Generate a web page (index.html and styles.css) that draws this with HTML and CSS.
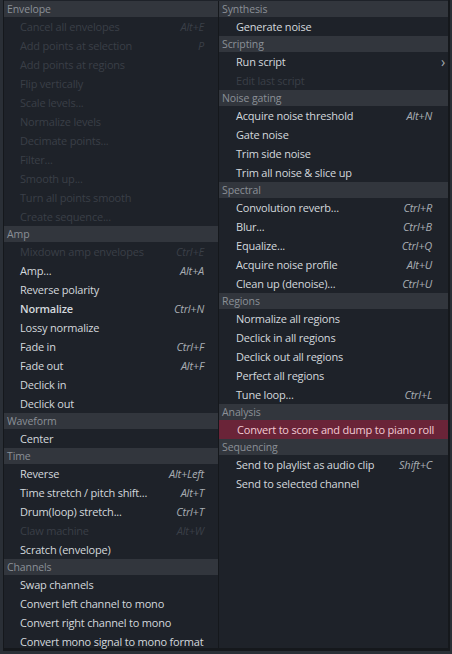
FILE: index.html
```html
<!DOCTYPE html>
<html>
<head>
<meta charset="utf-8">
<link rel="stylesheet" href="styles.css">
</head>
<body>
<div class="menu">
  <div class="col col-left">
    <div class="hdr">Envelope</div>
    <div class="item dis"><span>Cancel all envelopes</span><span class="sc">Alt+E</span></div>
    <div class="item dis"><span>Add points at selection</span><span class="sc">P</span></div>
    <div class="item dis"><span>Add points at regions</span></div>
    <div class="item dis"><span>Flip vertically</span></div>
    <div class="item dis"><span>Scale levels...</span></div>
    <div class="item dis"><span>Normalize levels</span></div>
    <div class="item dis"><span>Decimate points...</span></div>
    <div class="item dis"><span>Filter...</span></div>
    <div class="item dis"><span>Smooth up...</span></div>
    <div class="item dis"><span>Turn all points smooth</span></div>
    <div class="item dis"><span>Create sequence...</span></div>
    <div class="hdr">Amp</div>
    <div class="item dis"><span>Mixdown amp envelopes</span><span class="sc">Ctrl+E</span></div>
    <div class="item"><span>Amp...</span><span class="sc">Alt+A</span></div>
    <div class="item"><span>Reverse polarity</span></div>
    <div class="item"><span class="bold">Normalize</span><span class="sc">Ctrl+N</span></div>
    <div class="item"><span>Lossy normalize</span></div>
    <div class="item"><span>Fade in</span><span class="sc">Ctrl+F</span></div>
    <div class="item"><span>Fade out</span><span class="sc">Alt+F</span></div>
    <div class="item"><span>Declick in</span></div>
    <div class="item"><span>Declick out</span></div>
    <div class="hdr">Waveform</div>
    <div class="item"><span>Center</span></div>
    <div class="hdr">Time</div>
    <div class="item"><span>Reverse</span><span class="sc">Alt+Left</span></div>
    <div class="item"><span>Time stretch / pitch shift...</span><span class="sc">Alt+T</span></div>
    <div class="item"><span>Drum(loop) stretch...</span><span class="sc">Ctrl+T</span></div>
    <div class="item dis"><span>Claw machine</span><span class="sc">Alt+W</span></div>
    <div class="item"><span>Scratch (envelope)</span></div>
    <div class="hdr">Channels</div>
    <div class="item"><span>Swap channels</span></div>
    <div class="item"><span>Convert left channel to mono</span></div>
    <div class="item"><span>Convert right channel to mono</span></div>
    <div class="item"><span>Convert mono signal to mono format</span></div>
  </div>
  <div class="col col-right">
    <div class="hdr">Synthesis</div>
    <div class="item"><span>Generate noise</span></div>
    <div class="hdr">Scripting</div>
    <div class="item"><span>Run script</span><span class="chev">&#8250;</span></div>
    <div class="item dis"><span>Edit last script</span></div>
    <div class="hdr">Noise gating</div>
    <div class="item"><span>Acquire noise threshold</span><span class="sc">Alt+N</span></div>
    <div class="item"><span>Gate noise</span></div>
    <div class="item"><span>Trim side noise</span></div>
    <div class="item"><span>Trim all noise &amp; slice up</span></div>
    <div class="hdr">Spectral</div>
    <div class="item"><span>Convolution reverb...</span><span class="sc">Ctrl+R</span></div>
    <div class="item"><span>Blur...</span><span class="sc">Ctrl+B</span></div>
    <div class="item"><span>Equalize...</span><span class="sc">Ctrl+Q</span></div>
    <div class="item"><span>Acquire noise profile</span><span class="sc">Alt+U</span></div>
    <div class="item"><span>Clean up (denoise)...</span><span class="sc">Ctrl+U</span></div>
    <div class="hdr">Regions</div>
    <div class="item"><span>Normalize all regions</span></div>
    <div class="item"><span>Declick in all regions</span></div>
    <div class="item"><span>Declick out all regions</span></div>
    <div class="item"><span>Perfect all regions</span></div>
    <div class="item"><span>Tune loop...</span><span class="sc">Ctrl+L</span></div>
    <div class="hdr">Analysis</div>
    <div class="item sel"><span>Convert to score and dump to piano roll</span></div>
    <div class="hdr">Sequencing</div>
    <div class="item"><span>Send to playlist as audio clip</span><span class="sc">Shift+C</span></div>
    <div class="item"><span>Send to selected channel</span></div>
  </div>
</div>
</body>
</html>
```

FILE: styles.css
```css
html, body {
  margin: 0;
  padding: 0;
  background: #2a2f36;
  width: 452px;
  height: 654px;
  overflow: hidden;
}

.menu {
  display: flex;
  margin-left: 3px;
  width: 447px;
  height: 651px;
  border-left: 1px solid #15181c;
  border-right: 2px solid #15181c;
  border-bottom: 3px solid #15181c;
  padding-top: 1px;
  background: #1e2229;
  font-family: "Open Sans", "Noto Sans", sans-serif;
  font-size: 11px;
  letter-spacing: -0.2px;
  color: #d3d8dd;
  box-sizing: border-box;
}

.col {
  display: flex;
  flex-direction: column;
}

.col-left {
  width: 215px;
  border-right: 1px solid #15181c;
}

.col-right {
  width: 229px;
}

.hdr {
  height: 16px;
  line-height: 16px;
  background: #32363d;
  color: #8b9097;
  font-size: 10.5px;
  letter-spacing: -0.1px;
  padding-left: 3px;
}

.item {
  height: 19px;
  line-height: 19px;
  display: flex;
  justify-content: space-between;
  padding-left: 16px;
  padding-right: 14px;
  white-space: nowrap;
}

.col-right .item {
  padding-left: 17px;
  padding-right: 16px;
}

.sc {
  font-style: italic;
  color: #a7acb2;
}

.dis, .dis .sc {
  color: #3a3f47;
}

.bold {
  font-weight: 600;
}

.chev {
  color: #a7acb2;
  font-size: 14px;
  margin-right: -13px;
}

.sel {
  background: #6a2438;
  color: #f2cbd5;
}

.col-right .sel {
  padding-left: 18px;
}
```
